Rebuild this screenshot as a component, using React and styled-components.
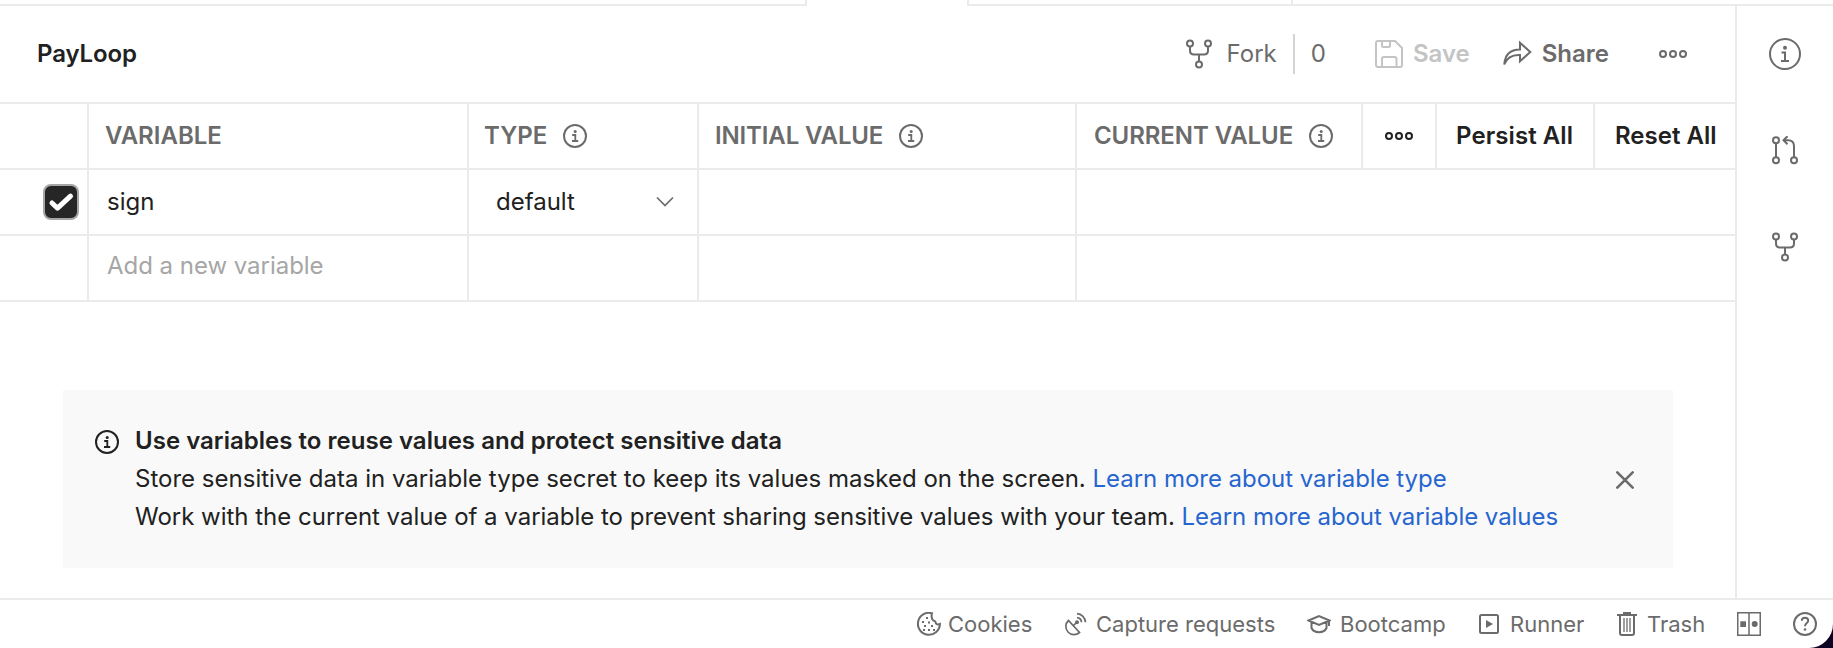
import React from "react";
import styled, { createGlobalStyle } from "styled-components";

const line = "#ebebeb";
const grey = "#6b6b6b";
const ink = "#212121";

const Global = createGlobalStyle`
  * { box-sizing: border-box; }
  html, body { margin: 0; padding: 0; }
  body { background: #0d0221; font-family: Inter, "Liberation Sans", sans-serif; font-size: 24px; color: ${ink}; overflow: hidden; }
  button { font: inherit; color: inherit; background: none; border: 0; padding: 0; }
  svg { display: block; flex: none; }
`;

const Window = styled.div`
  width: 1833px; height: 648px; background: #fff; display: flex; flex-direction: column;
  border-bottom-right-radius: 24px; overflow: hidden;
`;
const TabStrip = styled.div`display: flex; height: 6px; flex: none;`;
const Tab = styled.div`
  width: ${p => p.$w}px; flex: none;
  border-bottom: ${p => (p.$active ? "0" : `2px solid ${line}`)};
  border-right: ${p => (p.$last ? "0" : `2px solid ${line}`)};
`;
const Body = styled.div`display: flex; height: 592px; flex: none;`;
const Main = styled.main`width: 1735px; display: flex; flex-direction: column;`;
const Sidebar = styled.aside`
  width: 98px; border-left: 2px solid ${line}; display: flex; flex-direction: column; align-items: center;
  padding-top: 32px; gap: 66px; color: ${grey};
`;

const Header = styled.header`
  height: 96px; flex: none; display: flex; align-items: center; padding-left: 37px;
`;
const Text = styled.span`
  font-weight: ${p => p.$weight || 400};
  letter-spacing: ${p => p.$ls || 0}px;
  line-height: 38px; white-space: nowrap;
`;
const Spacer = styled.div`flex: 1;`;
const Action = styled.button`
  display: flex; align-items: center; gap: ${p => p.$gap}px; margin-right: ${p => p.$after}px;
  color: ${p => p.$color || grey};
`;
const Divider = styled.div`width: 2px; height: 40px; background: #d4d4d4; margin-right: 16px;`;

const Table = styled.div`border-top: 2px solid ${line}; flex: none;`;
const Row = styled.div`display: flex; height: 66px; border-bottom: 2px solid ${line};`;
const Cell = styled.div`
  width: ${p => p.$w}px; flex: none; display: flex; align-items: center;
  padding-left: ${p => p.$pl || 0}px; gap: 16px;
  padding-bottom: ${p => p.$pb || 0}px;
  border-right: ${p => (p.$open ? "0" : `2px solid ${line}`)};
  color: ${p => p.$color || ink};
`;
const Checkbox = styled.span`
  width: 36px; height: 36px; border: 2px solid #a6a6a6; border-radius: 8px; background: #262626; display: flex;
`;
const Select = styled.div`display: flex; width: 178px; align-items: center; justify-content: space-between;`;
const Arrow = styled.span`color: ${grey};`;

const Banner = styled.section`
  margin: 88px 62px 0 63px; height: 178px; background: #f9f9f9; display: flex; padding: 32px 39px 0 32px;
`;
const BannerBody = styled.div`display: flex; flex-direction: column; margin-left: 16px; flex: 1;`;
const Link = styled.a`color: #2765cf; letter-spacing: ${p => p.$ls || 0}px;`;
const Close = styled.button`display: flex; height: 24px; margin-top: 46px; color: ${grey};`;
const InfoSlot = styled.span`display: flex; margin-top: 8px; height: 24px;`;

const Footer = styled.footer`
  height: 50px; border-top: 2px solid ${line}; display: flex; align-items: center; padding-left: 917px; color: ${grey};
`;
const FooterItem = styled.div`
  display: flex; align-items: center; width: ${p => p.$w}px; flex: none; gap: ${p => p.$gap || 8}px; font-size: 22px;
`;

const Icon = ({ w = 24, h = w, sw = 2, children }) => (
  <svg width={w} height={h} viewBox={`0 0 ${w} ${h}`} fill="none" stroke="currentColor" strokeWidth={sw}>
    {children}
  </svg>
);

const Info = () => (
  <Icon w={24}>
    <circle cx="12" cy="12" r="11" />
    <circle cx="12.2" cy="7.6" r="1.5" fill="currentColor" stroke="none" />
    <path d="M9.2 11H12.3V17M9 17H15.2" strokeWidth="1.8" />
  </Icon>
);
const BigInfo = () => (
  <Icon w={32}>
    <circle cx="16" cy="16" r="15" />
    <circle cx="16" cy="9.7" r="2" fill="currentColor" stroke="none" />
    <path d="M12.5 14.5H16V23M12 23H20" />
  </Icon>
);
const ForkIcon = () => (
  <Icon w={26} h={30}>
    <circle cx="4" cy="4.5" r="3" /><circle cx="22" cy="4.5" r="3" /><circle cx="13" cy="25.5" r="3" />
    <path d="M4 7.5V11.5Q4 15.5 8 15.5H18Q22 15.5 22 11.5V7.5M13 15.5V22.5" />
  </Icon>
);
const PullIcon = () => (
  <Icon w={26} h={30}>
    <circle cx="4" cy="4.2" r="3" /><circle cx="4" cy="24.2" r="3" /><circle cx="22" cy="24.2" r="3" />
    <path d="M4 7.200V21.200M22 21.200V10.200Q22 4.200 16 4.200H11.500M15.500 0.200L11.500 4.200L15.500 8.200" />
  </Icon>
);
const SaveIcon = () => (
  <Icon w={28}>
    <path d="M3 1H20L27 8V25Q27 27 25 27H3Q1 27 1 25V3Q1 1 3 1Z" />
    <path d="M7 1V5.5Q7 7 8.5 7H13.5Q15 7 15 5.5V1M7 27V19Q7 17 9 17H19.500Q21.500 17 21.500 19V27" />
  </Icon>
);
const ShareIcon = () => (
  <Icon w={30} h={28}>
    <path d="M1.300 24.500C2 14 8 9.500 17 9.500V2.800L27.300 12L17 21.200V15C9 14.500 4 17.500 1.300 24.500Z" />
  </Icon>
);
const Dots = () => (
  <Icon w={28} h={8}>
    <circle cx="4" cy="4" r="3" /><circle cx="14" cy="4" r="3" /><circle cx="24" cy="4" r="3" />
  </Icon>
);
const Check = () => (
  <Icon w={32} sw={5}><path d="M7 17L12.500 22.200L25.500 10.200" stroke="#fff" strokeLinecap="round" strokeLinejoin="round" /></Icon>
);
const Chevron = () => <Icon w={18} h={12} sw={1.700}><path d="M1 1.500L9 9.500L17 1.500" /></Icon>;
const Cross = () => <Icon w={18} h={24} sw={2.600}><path d="M1.300 4.300L16.700 19.700M16.700 4.300L1.300 19.700" strokeLinecap="round" /></Icon>;

const Cookie = () => (
  <Icon w={24} sw={2}>
    <path d="M15 1.300A11 11 0 1 0 22.900 12C20.500 13 18.500 12 18.300 9.500C15 9 14 5 15 1.300Z" />
    <g fill="currentColor" stroke="none">
      <rect x="9" y="5" width="2" height="2" /><rect x="5" y="9" width="2" height="2" /><rect x="11" y="9.500" width="2" height="2" />
      <rect x="7" y="13" width="2" height="2" /><rect x="14" y="13" width="2" height="2" /><rect x="11" y="17" width="2" height="2" />
      <rect x="6" y="17" width="2" height="2" /><rect x="16" y="17" width="2" height="2" />
    </g>
  </Icon>
);
const Satellite = () => (
  <Icon w={24} sw={1.700}>
    <path d="M4.500 8.500A8 8 0 0 0 15.500 20.500ZM9.500 13.500L12.500 10.500" />
    <circle cx="13" cy="10.300" r="2" fill="currentColor" stroke="none" />
    <path d="M13 5.700A5 5 0 0 1 17.500 10.300M13 1.700A9 9 0 0 1 21.500 10.300" />
  </Icon>
);
const Cap = () => (
  <Icon w={24} sw={2}>
    <path d="M1.500 8.500L12 4L22.500 8.500L12 13ZM4.500 10V16C7 21.500 17 21.500 19.500 16V10M22 8.500V14" />
  </Icon>
);
const Play = () => (
  <Icon w={20}>
    <rect x="1" y="1" width="18" height="18" rx="1.500" />
    <path d="M7 6L14 10L7 14Z" fill="currentColor" stroke="none" />
  </Icon>
);
const Bin = () => (
  <Icon w={20} h={24}>
    <path d="M0 3H20M6 1H14" />
    <path d="M3 4V21Q3 23 5 23H15Q17 23 17 21V4" />
    <path d="M7 6V20M10 6V20M13 6V20" strokeWidth="1.300" />
  </Icon>
);
const Panes = () => (
  <Icon w={24} sw={1.500}>
    <path d="M0.750 0.750H23.250V23.250H0.750ZM12 1V23" />
    <rect x="3.300" y="9.300" width="5.700" height="5.700" fill="currentColor" stroke="none" />
    <circle cx="17.700" cy="12" r="3" fill="currentColor" stroke="none" />
  </Icon>
);
const Help = () => (
  <Icon w={24}>
    <circle cx="12" cy="12" r="11" />
    <path d="M8.800 8.700C8.800 4.800 15.200 4.800 15.200 8.700C15.200 11 12 11.200 12 14.200" />
    <circle cx="12" cy="17.500" r="1.300" fill="currentColor" stroke="none" />
  </Icon>
);

export default function App() {
  return (
    <>
      <Global />
      <Window>
        <TabStrip><Tab $w={807} /><Tab $w={162} $active /><Tab $w={324} /><Tab $w={540} $last /></TabStrip>
        <Body>
          <Main>
            <Header>
              <Text $weight={600} $ls={-0.1}>PayLoop</Text>
              <Spacer />
              <Action $gap={15} $after={16}><ForkIcon /><Text>Fork</Text></Action>
              <Divider />
              <Action $after={49}><Text>0</Text></Action>
              <Action $gap={10} $after={33} $color="#c4c4c4"><SaveIcon /><Text $weight={600}>Save</Text></Action>
              <Action $gap={9} $after={50}><ShareIcon /><Text $weight={600}>Share</Text></Action>
              <Action $after={48}><Dots /></Action>
            </Header>
            <Table>
              <Row>
                <Cell $w={89} />
                <Cell $w={380} $pl={16} $color={grey}><Text $weight={600}>VARIABLE</Text></Cell>
                <Cell $w={230} $pl={15} $color={grey}><Text $weight={600}>TYPE</Text><Info /></Cell>
                <Cell $w={378} $pl={16} $color={grey}><Text $weight={600} $ls={-0.13}>INITIAL VALUE</Text><Info /></Cell>
                <Cell $w={286} $pl={17} $color={grey}><Text $weight={600} $ls={-0.08}>CURRENT VALUE</Text><Info /></Cell>
                <Cell $w={74} $pl={22}><Dots /></Cell>
                <Cell $w={158} $pl={19}><Text $weight={600} $ls={0.08}>Persist All</Text></Cell>
                <Cell $w={140} $pl={20} $open><Text $weight={600}>Reset All</Text></Cell>
              </Row>
              <Row>
                <Cell $w={89} $pl={43}><Checkbox><Check /></Checkbox></Cell>
                <Cell $w={380} $pl={18}><Text>sign</Text></Cell>
                <Cell $w={230} $pl={27}><Select><Text>default</Text><Arrow><Chevron /></Arrow></Select></Cell>
                <Cell $w={378} />
                <Cell $w={658} $open />
              </Row>
              <Row>
                <Cell $w={89} />
                <Cell $w={380} $pl={18} $pb={4} $color="#a6a6a6"><Text $ls={-0.03}>Add a new variable</Text></Cell>
                <Cell $w={230} />
                <Cell $w={378} />
                <Cell $w={658} $open />
              </Row>
            </Table>
            <Banner>
              <InfoSlot><Info /></InfoSlot>
              <BannerBody>
                <Text $weight={600} $ls={0.02}>Use variables to reuse values and protect sensitive data</Text>
                <Text $ls={0.013}>Store sensitive data in variable type secret to keep its values masked on the screen. <Link $ls={-0.03}>Learn more about variable type</Link></Text>
                <Text $ls={-0.013}>Work with the current value of a variable to prevent sharing sensitive values with your team. <Link $ls={-0.05}>Learn more about variable values</Link></Text>
              </BannerBody>
              <Close aria-label="Close"><Cross /></Close>
            </Banner>
          </Main>
          <Sidebar><BigInfo /><PullIcon /><ForkIcon /></Sidebar>
        </Body>
        <Footer>
          <FooterItem $w={147} $gap={7}><Cookie /><Text>Cookies</Text></FooterItem>
          <FooterItem $w={243}><Satellite /><Text>Capture requests</Text></FooterItem>
          <FooterItem $w={172} $gap={9}><Cap /><Text>Bootcamp</Text></FooterItem>
          <FooterItem $w={138} $gap={11}><Play /><Text>Runner</Text></FooterItem>
          <FooterItem $w={120} $gap={10}><Bin /><Text>Trash</Text></FooterItem>
          <FooterItem $w={56}><Panes /></FooterItem>
          <FooterItem $w={24}><Help /></FooterItem>
        </Footer>
      </Window>
    </>
  );
}
